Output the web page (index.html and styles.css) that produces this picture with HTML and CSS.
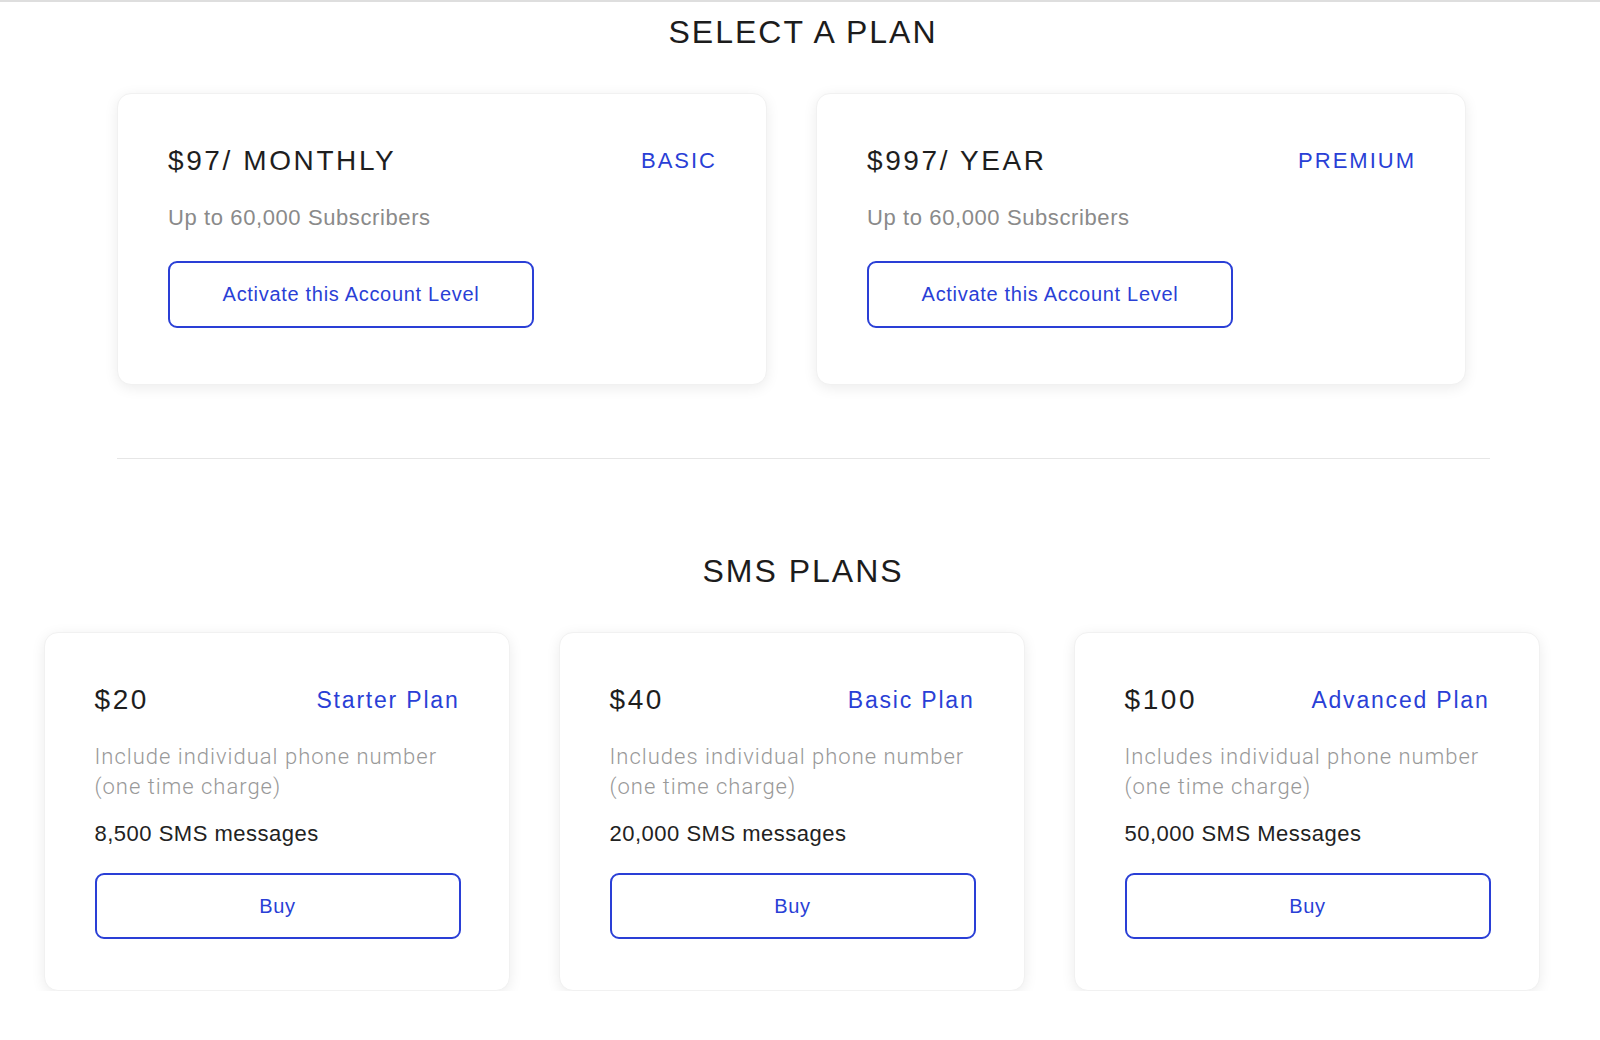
FILE: index.html
```html
<!DOCTYPE html>
<html lang="en">
<head>
    <meta charset="UTF-8">
    <meta name="viewport" content="width=device-width, initial-scale=1.0">
    <title>Select a Plan</title>
    <link rel="stylesheet" href="styles.css">
</head>
<body>
    <h1 class="section-title">SELECT A PLAN</h1>

    <div class="content">
        <div class="plans plans-account">
            <div class="card">
                <div class="card-head">
                    <span class="price">$97/ MONTHLY</span>
                    <span class="tag">BASIC</span>
                </div>
                <p class="limit">Up to 60,000 Subscribers</p>
                <button class="btn btn-activate">Activate this Account Level</button>
            </div>
            <div class="card">
                <div class="card-head">
                    <span class="price">$997/ YEAR</span>
                    <span class="tag">PREMIUM</span>
                </div>
                <p class="limit">Up to 60,000 Subscribers</p>
                <button class="btn btn-activate">Activate this Account Level</button>
            </div>
        </div>

        <hr class="divider">
    </div>

    <h2 class="section-title sms-title">SMS PLANS</h2>

    <div class="content">
        <div class="plans plans-sms">
            <div class="card card-sms">
                <div class="card-head">
                    <span class="price">$20</span>
                    <span class="tag tag-sms">Starter Plan</span>
                </div>
                <p class="desc">Include individual phone number (one time charge)</p>
                <p class="messages">8,500 SMS messages</p>
                <button class="btn">Buy</button>
            </div>
            <div class="card card-sms">
                <div class="card-head">
                    <span class="price">$40</span>
                    <span class="tag tag-sms">Basic Plan</span>
                </div>
                <p class="desc">Includes individual phone number (one time charge)</p>
                <p class="messages">20,000 SMS messages</p>
                <button class="btn">Buy</button>
            </div>
            <div class="card card-sms">
                <div class="card-head">
                    <span class="price">$100</span>
                    <span class="tag tag-sms">Advanced Plan</span>
                </div>
                <p class="desc">Includes individual phone number (one time charge)</p>
                <p class="messages">50,000 SMS Messages</p>
                <button class="btn">Buy</button>
            </div>
        </div>
    </div>
</body>
</html>
```

FILE: styles.css
```css
body {
    margin: 0;
    border-top: 2px solid #dedede;
    background-color: #fff;
    font-family: "Liberation Sans", Arial, sans-serif;
    color: #222;
}
.section-title {
    margin: 10px 0 0;
    padding-left: 6px;
    font-size: 32px;
    line-height: 40px;
    font-weight: normal;
    letter-spacing: 2px;
    text-align: center;
    color: #1c1c1c;
}
.sms-title {
    margin-top: 92px;
}
/* leaves room like the scrollbar gutter on the right */
.content {
    padding-right: 17px;
}
.plans {
    display: flex;
    gap: 49px;
    margin: 0 auto;
}
.plans-account {
    width: 1349px;
    margin-top: 41px;
}
.plans-sms {
    width: 1496px;
    margin-top: 41px;
}
.card {
    flex: 1;
    min-width: 0;
    box-sizing: border-box;
    padding: 50px 49px 56px 50px;
    background-color: #fff;
    border: 1px solid #f1f1f1;
    border-radius: 14px;
    box-shadow: 0 3px 14px rgba(0,0,0,0.08);
}
.card-sms {
    padding-bottom: 51px;
}
.card-head {
    display: flex;
    justify-content: space-between;
    align-items: center;
}
.price {
    font-size: 28px;
    line-height: 34px;
    letter-spacing: 2.6px;
    color: #1e1e1e;
}
.tag {
    font-size: 22px;
    letter-spacing: 2px;
    color: #2a3fd6;
}
.tag-sms {
    font-size: 23px;
    letter-spacing: 1.8px;
}
.limit {
    margin: 25px 0 0;
    font-size: 22px;
    line-height: 30px;
    letter-spacing: 0.6px;
    color: #8a8a8a;
}
.desc {
    margin: 25px 0 0;
    font-family: Roboto, "Liberation Sans", sans-serif;
    font-weight: 300;
    font-size: 22px;
    line-height: 30px;
    letter-spacing: 1px;
    color: #999;
}
.messages {
    margin: 17px 0 0;
    font-size: 22px;
    line-height: 30px;
    letter-spacing: 0.5px;
    color: #222;
}
.btn {
    display: block;
    box-sizing: border-box;
    width: 366px;
    height: 66px;
    margin-top: 24px;
    background-color: #fff;
    border: 2px solid #2a3fd6;
    border-radius: 9px;
    font-family: "Liberation Sans", Arial, sans-serif;
    font-size: 20px;
    letter-spacing: 0.7px;
    color: #2a3fd6;
    cursor: pointer;
}
.btn-activate {
    height: 67px;
    margin-top: 28px;
}
.divider {
    margin: 73px 93px 0 117px;
    border: none;
    border-top: 1px solid #e6e6e6;
}
```
